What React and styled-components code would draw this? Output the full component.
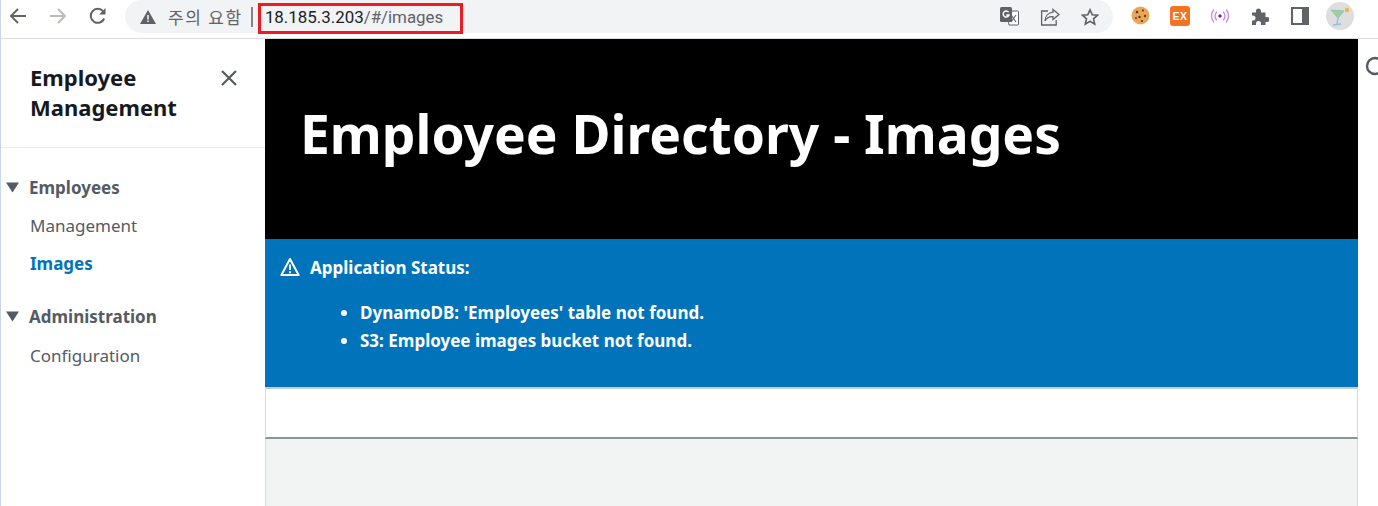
import React from 'react'
import styled, { createGlobalStyle } from 'styled-components'

const GlobalStyle = createGlobalStyle`
  html, body {
    margin: 0;
    padding: 0;
    background: #fff;
    overflow: hidden;
  }
  * {
    box-sizing: border-box;
  }
`

const Page = styled.div`
  width: 1378px;
  height: 506px;
  display: flex;
  flex-direction: column;
  border-left: 1px solid #c9d6ea;
  font-family: 'Noto Sans', sans-serif;
`

const BrowserBar = styled.header`
  height: 39px;
  flex: none;
  display: flex;
  align-items: flex-start;
  background: #fff;
  border-bottom: 1px solid #dadce0;
`

const NavButton = styled.button`
  width: 40px;
  height: 31px;
  padding: 0;
  border: 0;
  background: none;
  display: flex;
  align-items: center;
  justify-content: center;
  color: ${props => (props.disabled ? '#b9bbbe' : '#5f6368')};
`

const NavGroup = styled.div`
  width: 124px;
  flex: none;
  display: flex;
  margin-left: -3px;
  margin-right: 3px;
`

const Omnibox = styled.div`
  width: 988px;
  height: 33px;
  flex: none;
  display: flex;
  align-items: center;
  padding-left: 15px;
  background: #f1f3f4;
  border-radius: 17px;
  font-family: 'Roboto', 'Noto Sans CJK KR', sans-serif;
`

const Warning = styled.span`
  display: flex;
  align-items: center;
  gap: 12px;
  color: #5f6368;
  font-size: 17px;
  letter-spacing: 1.7px;
  font-family: 'Noto Sans CJK KR', sans-serif;
`

const Divider = styled.span`
  width: 2px;
  height: 20px;
  margin: 0 5px 0 8px;
  background: #80868b;
`

const UrlBox = styled.span`
  height: 31px;
  width: 205px;
  margin-top: 4px;
  padding: 0 0 3px 4px;
  display: flex;
  align-items: center;
  border: 3px solid #ed1c24;
  color: #5f6368;
  font-size: 16.9px;
  background: #f1f3f4;
`

const UrlHost = styled.span`
  color: #202124;
`

const OmniActions = styled.div`
  margin-left: auto;
  display: flex;
  align-items: center;
  gap: 21px;
  padding-right: 14px;
  color: #5f6368;
`

const Extensions = styled.div`
  display: flex;
  align-items: center;
  padding-left: 7px;
  height: 31px;
  color: #5f6368;
`

const ExtensionSlot = styled.span`
  width: 40px;
  flex: none;
  display: flex;
  align-items: center;
  justify-content: center;
`

const ExBadge = styled.span`
  width: 20px;
  height: 20px;
  border-radius: 3px;
  background: #f47321;
  color: #fff;
  font-family: 'Liberation Sans', sans-serif;
  font-size: 10.5px;
  font-weight: 700;
  letter-spacing: 0.6px;
  display: flex;
  align-items: center;
  justify-content: center;
`

const Avatar = styled.span`
  width: 28px;
  height: 28px;
  border-radius: 50%;
  background: #dedede;
  display: flex;
  align-items: center;
  justify-content: center;
`

const Body = styled.div`
  flex: 1;
  display: flex;
  min-height: 0;
`

const Sidebar = styled.nav`
  width: 264px;
  flex: none;
  background: #fff;
`

const SidebarHeader = styled.div`
  height: 109px;
  display: flex;
  justify-content: space-between;
  padding: 23px 26px 0 29px;
  border-bottom: 1px solid #eaeded;
`

const AppName = styled.div`
  width: 160px;
  color: #16191f;
  font-size: 22px;
  font-weight: 700;
  line-height: 30px;
`

const CloseButton = styled.button`
  width: 20px;
  height: 20px;
  margin-top: 6px;
  padding: 0;
  border: 0;
  background: none;
  color: #545b64;
`

const Section = styled.div`
  padding-top: ${props => props.$top}px;
`

const SectionTitle = styled.div`
  display: flex;
  align-items: center;
  gap: 9px;
  height: 24px;
  padding-left: 4px;
  color: #545b64;
  font-size: 17px;
  font-weight: 700;
`

const NavLink = styled.a`
  display: block;
  height: 24px;
  margin-top: ${props => props.$gap || 14}px;
  padding-left: 29px;
  color: ${props => (props.$active ? '#0073bb' : '#545b64')};
  font-size: 17px;
  font-weight: ${props => (props.$active ? 700 : 400)};
  line-height: 24px;
`

const Main = styled.main`
  width: 1093px;
  flex: none;
  display: flex;
  flex-direction: column;
`

const Hero = styled.div`
  height: 200px;
  flex: none;
  padding: 54px 0 0 35px;
  background: #000;
`

const HeroTitle = styled.h1`
  margin: 0;
  color: #fff;
  font-size: 53.3px;
  font-weight: 700;
  line-height: 82px;
`

const StatusBanner = styled.section`
  height: 148px;
  flex: none;
  padding: 15px 16px 0 15px;
  background: #0073bb;
  color: #fff;
  font-size: 17px;
  font-weight: 700;
`

const StatusHead = styled.div`
  display: flex;
  align-items: center;
  gap: 10px;
  height: 26px;
`

const StatusList = styled.ul`
  margin: 19px 0 0;
  padding-left: 80px;
  line-height: 28px;
`

const EmptyPanel = styled.div`
  height: 52px;
  flex: none;
  background: #fff;
  border: 1px solid #d5dbdb;
  border-top: 2px solid #c6cccc;
  border-bottom: 2px solid #879596;
`

const Footer = styled.div`
  flex: 1;
  background: #f2f3f3;
  border-left: 1px solid #d5dbdb;
  border-right: 1px solid #d5dbdb;
`

const Gutter = styled.aside`
  flex: 1;
  overflow: hidden;
  padding: 17px 0 0 7px;
  color: #545b64;
`

const BackIcon = () => (
  <svg width="18" height="18" viewBox="0 0 18 18" fill="none" stroke="currentColor" strokeWidth="1.9">
    <path d="M17 9H2M9 2L2 9l7 7" />
  </svg>
)

const ForwardIcon = () => (
  <svg width="18" height="18" viewBox="0 0 18 18" fill="none" stroke="currentColor" strokeWidth="1.9">
    <path d="M1 9h15M9 2l7 7-7 7" />
  </svg>
)

const ReloadIcon = () => (
  <svg width="18" height="18" viewBox="0 0 18 18" fill="none" stroke="currentColor" strokeWidth="2">
    <path d="M15.2 11.5A7 7 0 1 1 14 4.2" />
    <path d="M16.5 1v6.4h-6.4z" fill="currentColor" stroke="none" />
  </svg>
)

const WarnFilledIcon = () => (
  <svg width="16" height="14" viewBox="0 0 16 14">
    <path d="M8 0l8 14H0z" fill="#5f6368" />
    <path d="M7.2 5h1.6v4.4H7.2zM7.2 10.4h1.6V12H7.2z" fill="#f1f3f4" />
  </svg>
)

const TranslateIcon = () => (
  <svg width="19" height="19" viewBox="0 0 19 19">
    <path d="M7 4h10.5a1 1 0 0 1 1 1v12a1 1 0 0 1-1 1H9z" fill="#fff" stroke="#5f6368" />
    <path d="M11 8l5 7M16 8l-5 7" stroke="#5f6368" strokeWidth="1.2" />
    <rect x="0" y="0" width="12" height="15" rx="1.5" fill="#5f6368" />
    <path d="M8.6 5.2A3 3 0 1 0 9 8H6.2" fill="none" stroke="#fff" strokeWidth="1.4" />
  </svg>
)

const ShareIcon = () => (
  <svg width="20" height="18" viewBox="0 0 20 18" fill="none" stroke="currentColor" strokeWidth="1.3">
    <path d="M8 3H1.6v14h14.6v-5" />
    <path d="M13 1.5l6 5-6 5V8.6C9 8.4 6.4 10 5 13c.2-5 3.4-8.4 8-8.8z" />
  </svg>
)

const StarIcon = () => (
  <svg width="18" height="18" viewBox="0 0 18 18" fill="none" stroke="currentColor" strokeWidth="1.6">
    <path d="M9 1.8l2.2 4.9 5.3.5-4 3.6 1.2 5.3L9 13.3l-4.7 2.8 1.2-5.3-4-3.6 5.3-.5z" />
  </svg>
)

const CookieIcon = () => (
  <svg width="19" height="19" viewBox="0 0 19 19">
    <circle cx="9.5" cy="9.5" r="9" fill="#e8a656" />
    <circle cx="6" cy="6" r="1.3" fill="#5c3a1a" />
    <circle cx="12" cy="4.6" r="1" fill="#5c3a1a" />
    <circle cx="14" cy="10" r="1.2" fill="#5c3a1a" />
    <circle cx="8.5" cy="11" r="1.2" fill="#5c3a1a" />
    <circle cx="5" cy="12" r="0.9" fill="#5c3a1a" />
    <circle cx="11" cy="15" r="1.1" fill="#5c3a1a" />
  </svg>
)

const BroadcastIcon = () => (
  <svg width="18" height="16" viewBox="0 0 18 16" fill="none" stroke="#cf8ee6" strokeWidth="1.4">
    <circle cx="9" cy="8" r="1.7" fill="#7b1fa2" stroke="none" />
    <path d="M5.8 3.8a6 6 0 0 0 0 8.4M12.2 3.8a6 6 0 0 1 0 8.4" />
    <path d="M3 1.5a10 10 0 0 0 0 13M15 1.5a10 10 0 0 1 0 13" />
  </svg>
)

const PuzzleIcon = () => (
  <svg width="18" height="18" viewBox="0 0 18 18" fill="currentColor">
    <path d="M1 5.5h4V4a2.5 2.5 0 0 1 5 0v1.5h4.5V10H16a2.5 2.5 0 0 1 0 5h-1.5v3H10v-1.5a2.5 2.5 0 0 0-5 0V18H1v-4.5h1a2.5 2.5 0 0 0 0-5H1z" />
  </svg>
)

const SidePanelIcon = () => (
  <svg width="18" height="18" viewBox="0 0 18 18" fill="none" stroke="currentColor">
    <rect x="1" y="1" width="16" height="16" strokeWidth="2" />
    <rect x="11" y="1" width="6" height="16" fill="currentColor" stroke="none" />
  </svg>
)

const CocktailIcon = () => (
  <svg width="22" height="22" viewBox="0 0 22 22" fill="none">
    <path d="M2 5l13 1-6 7z" fill="#a6cf8a" stroke="#8ac4d0" />
    <path d="M9 13l-1 6M4 20l8-1" stroke="#8ac4d0" strokeWidth="1.4" />
    <circle cx="18" cy="5" r="2.2" fill="#f2b632" />
  </svg>
)

const CloseIcon = () => (
  <svg width="20" height="20" viewBox="0 0 20 20" fill="none" stroke="currentColor" strokeWidth="2.2">
    <path d="M3 3l14 14M17 3L3 17" />
  </svg>
)

const CaretIcon = () => (
  <svg width="15" height="11" viewBox="0 0 15 11">
    <path d="M1 0.5h13L7.5 10.5z" fill="#545b64" />
  </svg>
)

const AlertIcon = () => (
  <svg width="20" height="20" viewBox="0 0 20 20" fill="none" stroke="#fff" strokeWidth="2">
    <path d="M10 2l8.6 16H1.4z" strokeLinejoin="round" />
    <path d="M10 7.5v5.5M10 14.2v2" />
  </svg>
)

const InfoRing = () => (
  <svg width="20" height="20" viewBox="0 0 20 20" fill="none" stroke="currentColor" strokeWidth="2.4">
    <circle cx="10" cy="10" r="8" />
  </svg>
)

const App = () => (
  <Page>
    <GlobalStyle />
    <BrowserBar>
      <NavGroup>
        <NavButton><BackIcon /></NavButton>
        <NavButton disabled><ForwardIcon /></NavButton>
        <NavButton><ReloadIcon /></NavButton>
      </NavGroup>
      <Omnibox>
        <Warning><WarnFilledIcon />주의 요함</Warning>
        <Divider />
        <UrlBox><UrlHost>18.185.3.203</UrlHost>/#/images</UrlBox>
        <OmniActions>
          <TranslateIcon />
          <ShareIcon />
          <StarIcon />
        </OmniActions>
      </Omnibox>
      <Extensions>
        <ExtensionSlot><CookieIcon /></ExtensionSlot>
        <ExtensionSlot><ExBadge>EX</ExBadge></ExtensionSlot>
        <ExtensionSlot><BroadcastIcon /></ExtensionSlot>
        <ExtensionSlot><PuzzleIcon /></ExtensionSlot>
        <ExtensionSlot><SidePanelIcon /></ExtensionSlot>
        <ExtensionSlot><Avatar><CocktailIcon /></Avatar></ExtensionSlot>
      </Extensions>
    </BrowserBar>
    <Body>
      <Sidebar>
        <SidebarHeader>
          <AppName>Employee Management</AppName>
          <CloseButton><CloseIcon /></CloseButton>
        </SidebarHeader>
        <Section $top={27}>
          <SectionTitle><CaretIcon />Employees</SectionTitle>
          <NavLink $gap={15}>Management</NavLink>
          <NavLink $active>Images</NavLink>
        </Section>
        <Section $top={28}>
          <SectionTitle><CaretIcon />Administration</SectionTitle>
          <NavLink $gap={16}>Configuration</NavLink>
        </Section>
      </Sidebar>
      <Main>
        <Hero>
          <HeroTitle>Employee Directory - Images</HeroTitle>
        </Hero>
        <StatusBanner>
          <StatusHead><AlertIcon />Application Status:</StatusHead>
          <StatusList>
            <li>DynamoDB: 'Employees' table not found.</li>
            <li>S3: Employee images bucket not found.</li>
          </StatusList>
        </StatusBanner>
        <EmptyPanel />
        <Footer />
      </Main>
      <Gutter><InfoRing /></Gutter>
    </Body>
  </Page>
)

export default App
